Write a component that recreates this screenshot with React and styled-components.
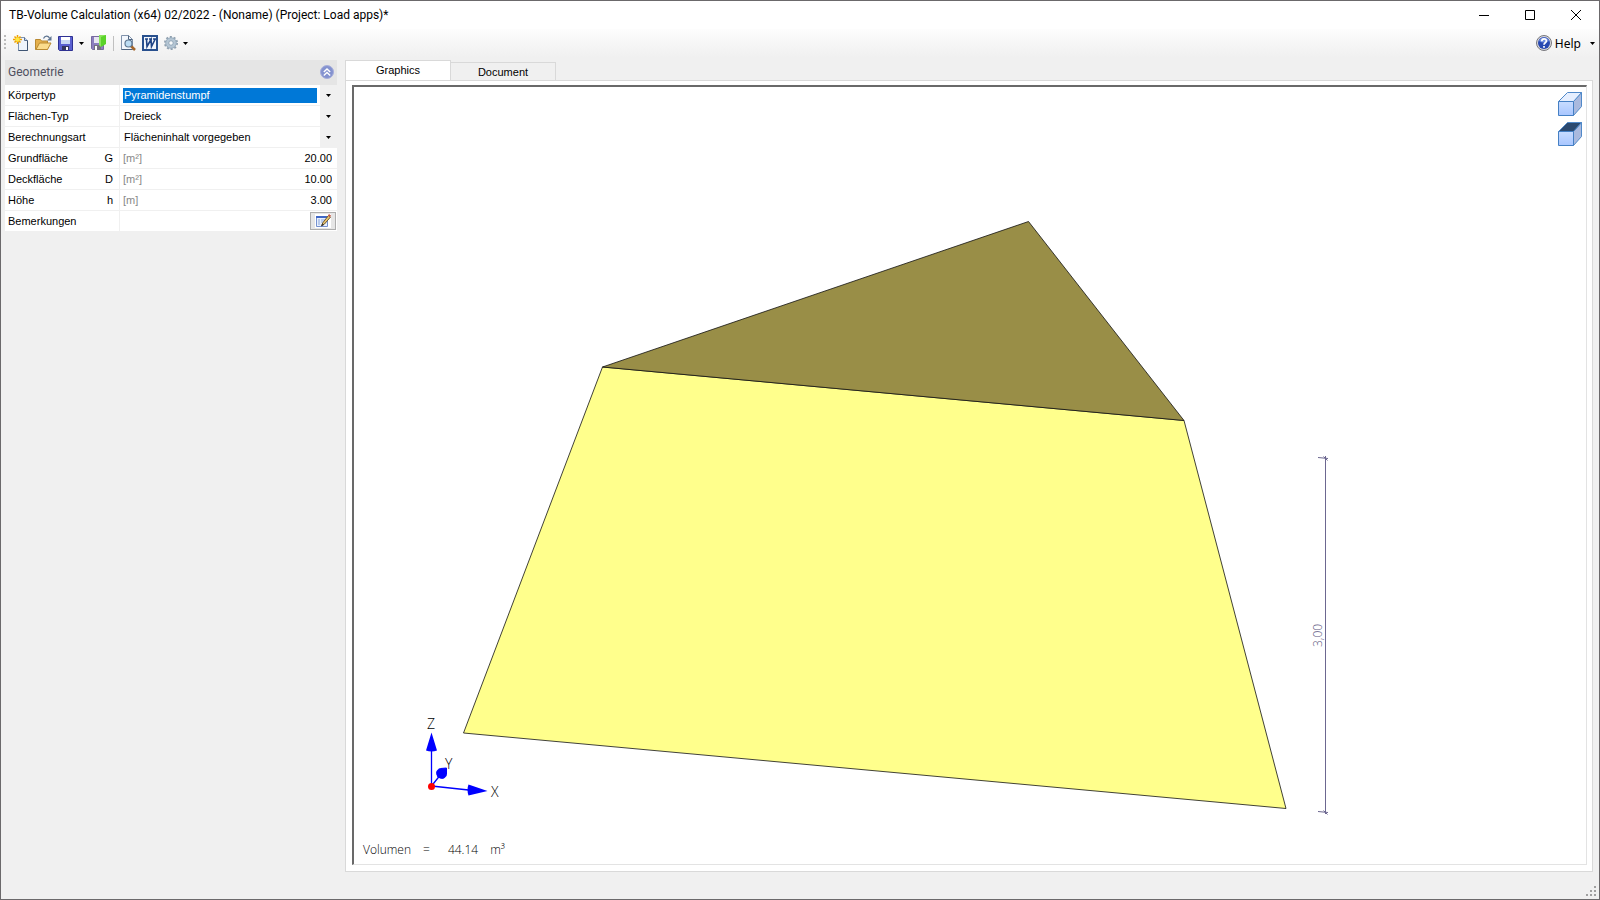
import React, { useState } from 'react';
import styled, { createGlobalStyle } from 'styled-components';

const GlobalStyle = createGlobalStyle`
  * {
    box-sizing: border-box;
  }
  body {
    margin: 0;
    color: #000;
    font-family: "Liberation Sans", Arial, sans-serif;
    font-size: 11px;
  }
  button, input, select {
    font: inherit;
    color: inherit;
    border: none;
    margin: 0;
    padding: 0;
    background: transparent;
  }
  svg {
    display: block;
  }
`;

const Window = styled.div`
  display: flex;
  flex-direction: column;
  min-height: 100vh;
  border: 1px solid #6b696b;
  background: #f0f0f0;
`;

const TitleBar = styled.header`
  display: flex;
  align-items: center;
  justify-content: space-between;
  height: 28px;
  background: #fff;
`;

const Title = styled.h1`
  margin: 0;
  padding-left: 8px;
  font: 12px Roboto, sans-serif;
`;

const WindowButtons = styled.div`
  display: flex;
`;

const WindowButton = styled.button`
  display: flex;
  align-items: center;
  justify-content: center;
  width: 46px;
  height: 28px;
  &:hover {
    background: #e5e5e5;
  }
`;

const ToolBar = styled.nav`
  display: flex;
  align-items: center;
  height: 28px;
  padding: 0 4px 0 3px;
  background: linear-gradient(#fdfdfd, #f0f0f0);
`;

const Grip = styled.span`
  width: 2px;
  height: 16px;
  margin-right: 7px;
  background: repeating-linear-gradient(#bbb 0 2px, transparent 2px 4px);
`;

const ToolButton = styled.button`
  display: flex;
  align-items: center;
  height: 22px;
  margin-right: ${(props) => props.$gap || 6}px;
`;

const Separator = styled.span`
  width: 1px;
  height: 15px;
  margin-right: 6px;
  background: #c0c0c0;
`;

const HelpButton = styled.button`
  display: flex;
  align-items: center;
  gap: 3px;
  margin-left: auto;
  font: 12px "Noto Sans", sans-serif;
`;

const HelpText = styled.span`
  margin-right: 6px;
`;

const Body = styled.div`
  display: flex;
  flex: 1;
  gap: 8px;
  padding: 3px 6px 27px 4px;
`;

const SidePanel = styled.aside`
  flex: none;
  width: 332px;
`;

const PanelHeader = styled.div`
  display: flex;
  align-items: center;
  justify-content: space-between;
  height: 25px;
  padding: 0 3px 1px;
  background: #e5e5e5;
`;

const PanelTitle = styled.h2`
  margin: 0;
  font: 12px Roboto, sans-serif;
  color: #505060;
`;

const Row = styled.div`
  display: grid;
  grid-template-columns: 114px 1fr;
  column-gap: 1px;
  height: 21px;
  border-bottom: 1px solid #f0f0f0;
`;

const Label = styled.label`
  display: flex;
  align-items: center;
  justify-content: space-between;
  padding: 0 6px 0 3px;
  background: #fff;
`;

const Field = styled.div`
  display: flex;
  align-items: center;
  background: #fff;
  padding-left: 3px;
`;

const Unit = styled.span`
  color: #888;
`;

const NumberInput = styled.input`
  flex: 1;
  min-width: 0;
  padding-right: 5px;
  text-align: right;
  outline: none;
`;

const Select = styled.select`
  flex: 1;
  height: 15px;
  appearance: none;
  padding-left: 1px;
  outline: none;
  background: ${(props) => (props.$active ? '#0078d7' : 'transparent')};
  color: ${(props) => (props.$active ? '#fff' : '#000')};
`;

const DropArea = styled.span`
  display: flex;
  align-items: center;
  justify-content: center;
  width: 17px;
  height: 20px;
  margin-left: 3px;
  background: #f0f0f0;
`;

const NoteButton = styled.button`
  display: flex;
  align-items: center;
  justify-content: center;
  width: 26px;
  height: 18px;
  margin: 0 1px 0 auto;
  border: 1px solid #adadad;
  background: #e6e6e6;
`;

const Workspace = styled.main`
  display: flex;
  flex: 1;
  flex-direction: column;
  min-width: 0;
`;

const TabList = styled.div`
  display: flex;
  align-items: flex-end;
  height: 20px;
`;

const Tab = styled.button`
  width: ${(props) => (props.$active ? 106 : 105)}px;
  height: ${(props) => (props.$active ? 21 : 18)}px;
  margin-bottom: ${(props) => (props.$active ? -1 : 0)}px;
  padding-bottom: ${(props) => (props.$active ? 2 : 0)}px;
  border: 1px solid #d9d9d9;
  border-bottom: none;
  border-left-width: ${(props) => (props.$active ? 1 : 0)}px;
  background: ${(props) => (props.$active ? '#fff' : '#f0f0f0')};
`;

const TabPage = styled.section`
  display: flex;
  flex: 1;
  padding: 4px 5px 6px 6px;
  border: 1px solid #d9d9d9;
  background: #fff;
`;

const Viewer = styled.div`
  position: relative;
  flex: 1;
  min-width: 0;
  border: 1px solid #e3e3e3;
  border-top: 2px solid #696969;
  border-left: 2px solid #696969;
`;

const Scene = styled.svg`
  width: 100%;
  height: 100%;
  font-family: "Open Sans", sans-serif;
  font-weight: 300;
`;

const ViewTools = styled.div`
  position: absolute;
  top: 5px;
  right: 4px;
  display: flex;
  flex-direction: column;
  gap: 6px;
`;

const Readout = styled.div`
  position: absolute;
  left: 9px;
  bottom: 6px;
  display: flex;
  gap: 12px;
  font: 300 12px "Open Sans", sans-serif;
`;

const ReadoutValue = styled.span`
  margin-left: 6px;
`;

const ResizeGrip = styled.svg`
  position: absolute;
  right: 4px;
  bottom: 4px;
`;

const Caret = () => (
  <svg width="5" height="3"><path d="M0 0h5L2.500 3z" fill="#000" /></svg>
);

const NewIcon = () => (
  <svg width="16" height="16" viewBox="0 0 16 16">
    <path d="M5.500 2.500h6l3 3v10h-9z" fill="#eef4fc" stroke="#7f95b5" />
    <path d="M14.500 5.500v10h-9" fill="none" stroke="#3f5573" />
    <path d="M11.500 2.500v3h3" fill="#c5d5ec" stroke="#5a7090" />
    <path d="M4.500 0v9M0 4.500h9M1.500 1.500l6 6M7.500 1.500l-6 6" stroke="#f0a000" strokeWidth="1.500" />
    <circle cx="4.500" cy="4.500" r="2.200" fill="#ffe840" />
  </svg>
);

const OpenIcon = () => (
  <svg width="17" height="16" viewBox="0 0 17 16">
    <path d="M.5 14.500v-10h5l1 1.500h6v8.500z" fill="#e5b04c" stroke="#b98a32" />
    <path d="M1 14.500l3.500-6.500h11.500l-3.500 6.500z" fill="#fbdc8c" stroke="#b98a32" />
    <path d="M8.500 3.500c1.500-3 4.500-3 6-.5" fill="none" stroke="#5f7591" strokeWidth="1.300" />
    <path d="M16.500 1v4.500h-4.500z" fill="#5f7591" />
  </svg>
);

const SaveIcon = () => (
  <svg width="15" height="15" viewBox="0 0 15 15">
    <path d="M.5.5h14v14h-13l-1-1z" fill="#5a60d0" stroke="#2e3192" />
    <path d="M3 1h9v7H3z" fill="#c9d8f4" />
    <path d="M3 1h9v3H3z" fill="#fff" />
    <path d="M4 10h7v4H4z" fill="#34365e" />
    <path d="M8 11h2v3H8z" fill="#fff" />
  </svg>
);

const SaveCloseIcon = () => (
  <svg width="16" height="16" viewBox="0 0 16 16">
    <path d="M.5 1.500h12v13h-11l-1-1z" fill="#8d7fc0" stroke="#77699f" />
    <path d="M3 2h6v6H3z" fill="#e8e6f2" />
    <path d="M3 10h7v5H3z" fill="#75707f" />
    <path d="M4 11h2v4H4z" fill="#fff" />
    <path d="M8 0h7v9l-5 3V3z" fill="#5bd32a" />
    <path d="M8 0h7l-5 2v10l-2-2z" fill="#8ce45e" />
  </svg>
);

const PreviewIcon = () => (
  <svg width="16" height="16" viewBox="0 0 16 16">
    <path d="M1.500.5h7l4 4v10h-11z" fill="#f3f7fd" stroke="#8193ac" />
    <path d="M8.500.5v4h4M1.500 14.500h11" fill="none" stroke="#4f6480" />
    <path d="M11 11l4 4" stroke="#a5662b" strokeWidth="2.500" />
    <circle cx="8.500" cy="8.500" r="3.500" fill="#bcdcf3" stroke="#5f7893" strokeWidth="1.200" />
  </svg>
);

const WordIcon = () => (
  <svg width="16" height="16" viewBox="0 0 16 16">
    <path d="M1 1h14v14H1z" fill="#f2f6fc" stroke="#28508e" strokeWidth="2" />
    <path d="M3 4h3M7 4h3M11 4h3M4.500 4.500l.5 7 4-7 .5 7 3.500-7" fill="none" stroke="#1f4486" strokeWidth="1.600" />
  </svg>
);

const GearIcon = () => (
  <svg width="15" height="16" viewBox="0 0 15 16">
    <circle cx="7" cy="8" r="6" fill="none" stroke="#8f9fae" strokeWidth="2" strokeDasharray="2 1.770" />
    <circle cx="7" cy="8" r="4" fill="#e5ecf2" stroke="#b5c6d4" strokeWidth="3" />
    <circle cx="7" cy="8" r="5.300" fill="none" stroke="#8da2b5" strokeWidth=".7" />
    <circle cx="7" cy="8" r="2.300" fill="#f7f9fa" stroke="#8ba1b4" />
  </svg>
);

const HelpIcon = () => (
  <svg width="16" height="16" viewBox="0 0 16 16">
    <circle cx="8" cy="8" r="7.500" fill="#d9d9de" stroke="#77777c" />
    <circle cx="8" cy="8" r="6" fill="#2748b0" />
    <path d="M3 6a5.300 5.300 0 0 1 10 0q-5 3-10 0z" fill="#6f8de0" />
    <path d="M5.800 6.300c0-3.200 4.600-3 4.600-.3C10.400 7.800 8 7.800 8 9.700M8 11v1.800" fill="none" stroke="#fff" strokeWidth="1.700" />
  </svg>
);

const CollapseIcon = () => (
  <svg width="14" height="14" viewBox="0 0 14 14">
    <circle cx="7" cy="7" r="6.500" fill="#8492cf" stroke="#a6aeda" />
    <path d="M3.800 7L7 4l3.200 3M3.800 10.500L7 7.500l3.200 3" fill="none" stroke="#fff" strokeWidth="1.400" />
  </svg>
);

const NoteIcon = () => (
  <svg width="16" height="14" viewBox="0 0 16 14">
    <path d="M0 0h16v14H0z" fill="#fff" />
    <path d="M1.500 2.500h11v10h-11z" fill="#e6effc" stroke="#7590cf" />
    <path d="M1 2h12v2H1z" fill="#3f67c5" />
    <path d="M3 6h2M3 8h2M3 10h2M6 6h4M6 8h2" stroke="#8aa5dc" />
    <path d="M6.500 11.500L8 8.500l5.500-7 2 1.500-6 7z" fill="#edc66c" stroke="#6b5733" />
    <path d="M6 12.500l1.500-3 1.500 1.500z" fill="#333" />
    <path d="M13 1.500l1-1.500 2 1.500-1 1.500z" fill="#c9564a" />
  </svg>
);

const CubeIcon = ({ top }) => (
  <svg width="24" height="24" viewBox="0 0 24 24">
    <defs>
      <linearGradient id="cubeFront" x2="0" y2="1">
        <stop stopColor="#c8dcff" />
        <stop offset="1" stopColor="#a8c6ff" />
      </linearGradient>
    </defs>
    <path d="M15.500 9.500l8-9v14l-8 9z" fill="#a9b9de" stroke="#5089c9" />
    <path d="M.5 9.500l9-9h14l-8 9z" fill={top} stroke="#5089c9" />
    <path d="M.5 9.500h15v14H.5z" fill="url(#cubeFront)" stroke="#4580c4" />
  </svg>
);

const selects = [
  { id: 'body', label: 'Körpertyp', value: 'Pyramidenstumpf' },
  { id: 'face', label: 'Flächen-Typ', value: 'Dreieck' },
  { id: 'mode', label: 'Berechnungsart', value: 'Flächeninhalt vorgegeben' },
];

const numbers = [
  { id: 'base', label: 'Grundfläche', symbol: 'G', unit: '[m²]', value: '20.00' },
  { id: 'cover', label: 'Deckfläche', symbol: 'D', unit: '[m²]', value: '10.00' },
  { id: 'height', label: 'Höhe', symbol: 'h', unit: '[m]', value: '3.00' },
];

const GeometryPanel = () => (
  <SidePanel>
    <PanelHeader>
      <PanelTitle>Geometrie</PanelTitle>
      <button aria-label="Collapse"><CollapseIcon /></button>
    </PanelHeader>
    {selects.map((item, i) => (
      <Row key={item.id}>
        <Label htmlFor={item.id}>{item.label}</Label>
        <Field>
          <Select id={item.id} $active={i === 0}>
            <option>{item.value}</option>
          </Select>
          <DropArea><Caret /></DropArea>
        </Field>
      </Row>
    ))}
    {numbers.map((item) => (
      <Row key={item.id}>
        <Label htmlFor={item.id}>
          {item.label}
          <span>{item.symbol}</span>
        </Label>
        <Field>
          <Unit>{item.unit}</Unit>
          <NumberInput id={item.id} defaultValue={item.value} />
        </Field>
      </Row>
    ))}
    <Row>
      <Label htmlFor="notes">Bemerkungen</Label>
      <Field>
        <NoteButton id="notes"><NoteIcon /></NoteButton>
      </Field>
    </Row>
  </SidePanel>
);

const Frustum = () => (
  <Scene viewBox="0 0 1232 777">
    <g stroke="#111" strokeWidth=".8" strokeLinejoin="round">
      <path d="M248.500 280L830 333.500 932 721.500 109.500 646z" fill="#ffff8c" />
      <path d="M248.500 280L674.500 134.500 830 333.500z" fill="#998e47" />
    </g>
    <g stroke="#6c6790" fill="none">
      <path d="M971.500 369v358" />
      <path d="M964 370.500l10 1M964 724.500l10 1M969.500 369.500l4 4M969.500 723.500l4 4" />
    </g>
    <text transform="translate(968 560) rotate(-90)" fontSize="12" fill="#5c5780">3,00</text>
    <g stroke="#00f" fill="#00f">
      <path d="M77.500 699V660M77.500 699l37 4M77.500 699l8-10" strokeWidth="1.300" />
      <path d="M77.500 645.500l5.500 18q-5.500 2-11 0zM133.500 704l-19-6.500q-2 5 0 11z" stroke="none" />
      <path d="M92.500 681l-6 .5a5 5 0 1 0 6 6z" />
    </g>
    <circle cx="77.500" cy="699.500" r="3.500" fill="#f00" />
    <g fontSize="14" fill="#000">
      <text x="73" y="642">Z</text>
      <text x="91" y="682">Y</text>
      <text x="137" y="710">X</text>
    </g>
  </Scene>
);

const App = () => {
  const [tab, setTab] = useState('Graphics');

  return (
    <Window>
      <GlobalStyle />
      <TitleBar>
        <Title>TB-Volume Calculation (x64) 02/2022 - (Noname) (Project: Load apps)*</Title>
        <WindowButtons>
          <WindowButton aria-label="Minimize">
            <svg width="10" height="10"><path d="M0 5.500h10" stroke="#000" /></svg>
          </WindowButton>
          <WindowButton aria-label="Maximize">
            <svg width="10" height="10"><path d="M.5.5h9v9h-9z" fill="none" stroke="#000" /></svg>
          </WindowButton>
          <WindowButton aria-label="Close">
            <svg width="10" height="10"><path d="M0 0l10 10M10 0L0 10" stroke="#000" /></svg>
          </WindowButton>
        </WindowButtons>
      </TitleBar>
      <ToolBar>
        <Grip />
        <ToolButton aria-label="New"><NewIcon /></ToolButton>
        <ToolButton aria-label="Open"><OpenIcon /></ToolButton>
        <ToolButton aria-label="Save"><SaveIcon /></ToolButton>
        <ToolButton aria-label="Save options" $gap={7}><Caret /></ToolButton>
        <ToolButton aria-label="Save and close"><SaveCloseIcon /></ToolButton>
        <Separator />
        <ToolButton aria-label="Preview"><PreviewIcon /></ToolButton>
        <ToolButton aria-label="Word export"><WordIcon /></ToolButton>
        <ToolButton aria-label="Settings" $gap={4}><GearIcon /></ToolButton>
        <ToolButton aria-label="Settings options"><Caret /></ToolButton>
        <HelpButton>
          <HelpIcon />
          <HelpText>Help</HelpText>
          <Caret />
        </HelpButton>
      </ToolBar>
      <Body>
        <GeometryPanel />
        <Workspace>
          <TabList>
            {['Graphics', 'Document'].map((name) => (
              <Tab key={name} $active={tab === name} onClick={() => setTab(name)}>{name}</Tab>
            ))}
          </TabList>
          <TabPage>
            <Viewer>
              <Frustum />
              <ViewTools>
                <button aria-label="Solid view"><CubeIcon top="#e6efff" /></button>
                <button aria-label="Top view"><CubeIcon top="#2c4a70" /></button>
              </ViewTools>
              <Readout>
                <span>Volumen</span>
                <span>=</span>
                <ReadoutValue>44.14</ReadoutValue>
                <span>m³</span>
              </Readout>
            </Viewer>
          </TabPage>
        </Workspace>
      </Body>
      <ResizeGrip width="10" height="10" fill="#a0a0a0">
        <path d="M8 0h2v2H8zM4 4h2v2H4zM8 4h2v2H8zM0 8h2v2H0zM4 8h2v2H4zM8 8h2v2H8z" />
      </ResizeGrip>
    </Window>
  );
};

export default App;
